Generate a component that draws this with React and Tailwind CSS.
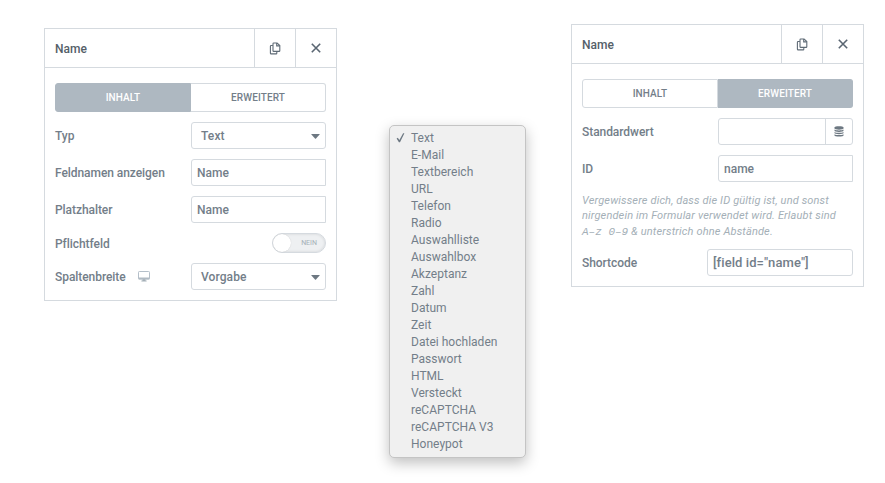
import React from "react";

const fieldTypes = [
  "Text",
  "E-Mail",
  "Textbereich",
  "URL",
  "Telefon",
  "Radio",
  "Auswahlliste",
  "Auswahlbox",
  "Akzeptanz",
  "Zahl",
  "Datum",
  "Zeit",
  "Datei hochladen",
  "Passwort",
  "HTML",
  "Versteckt",
  "reCAPTCHA",
  "reCAPTCHA V3",
  "Honeypot",
];

function CopyIcon() {
  return (
    <svg width="12" height="13" viewBox="0 0 12 13" fill="none" stroke="#5f6b76" strokeWidth="1.1">
      <path d="M4.700 1h3.400l2.700 2.500v5.200a.7.7 0 0 1-.7.700H4.700a.7.7 0 0 1-.7-.7V1.700a.7.7 0 0 1 .7-.7z" />
      <path d="M7.700 1v2.900h3" />
      <path d="M3.900 3.500H2.100a.7.7 0 0 0-.7.700v7a.7.7 0 0 0 .7.700h5a.7.7 0 0 0 .7-.7V9.600" />
    </svg>
  );
}

function CloseIcon() {
  return (
    <svg width="10" height="10" viewBox="0 0 10 10" stroke="#5a6672" strokeWidth="1.600">
      <path d="M.8.8l8.400 8.400M9.200.8L.8 9.200" />
    </svg>
  );
}

function MonitorIcon() {
  return (
    <svg width="12" height="11" viewBox="0 0 12 11">
      <rect x=".5" y=".5" width="11" height="7.500" rx=".8" fill="none" stroke="#b4bfc9" />
      <path d="M.5 6.500h11v1.900H.5z" fill="#b0bac3" />
      <path d="M4.700 8.200h2.600l.3 1.300h1v.9H3.400v-.9h1z" fill="#a4afb7" />
    </svg>
  );
}

function DatabaseIcon() {
  return (
    <svg width="10" height="11" viewBox="0 0 10 11" fill="#6d7882">
      <path d="M.5 1.600C.5.8 2.500.3 5 .3s4.500.5 4.500 1.300v.9C9.500 3.200 7.500 3.700 5 3.700S.5 3.200.5 2.500z" />
      <path d="M.5 3.500C1.500 4.200 3.200 4.400 5 4.400s3.500-.2 4.500-.9v1.300c0 .7-2 1.200-4.500 1.200S.5 5.500.5 4.800z" />
      <path d="M.5 5.900C1.500 6.600 3.200 6.800 5 6.800s3.500-.2 4.500-.9v1.200c0 .7-2 1.200-4.500 1.200S.5 7.800.5 7.100z" />
      <path d="M.5 8.200C1.500 8.900 3.200 9.100 5 9.100s3.500-.2 4.500-.9v1.200c0 .7-2 1.200-4.500 1.200S.5 10.100.5 9.400z" />
    </svg>
  );
}

function Panel({ children }) {
  return (
    <div className="w-[293px] border border-[#d5dadf] bg-white">
      <div className="flex h-[39px] border-b border-[#d5dadf]">
        <div className="flex flex-1 items-center pt-0.5 pl-2.5 font-medium text-[#556068]">Name</div>
        <button className="flex w-[41px] items-center justify-center border-l border-[#d5dadf]">
          <CopyIcon />
        </button>
        <button className="flex w-[41px] items-center justify-center border-l border-[#d5dadf]">
          <CloseIcon />
        </button>
      </div>
      <div className="flex flex-col gap-2.5 px-2.5 pt-[15px] pb-2.5">{children}</div>
    </div>
  );
}

function Tabs({ active }) {
  const on = "bg-[#aeb8c1] border-[#aeb8c1] text-white";
  const off = "bg-white border-[#d5dadf] text-[#737e89]";
  return (
    <div className="flex h-[29px] text-[10px] font-medium tracking-[0.1px]">
      <button className={"w-[136px] rounded-l-[3px] border " + (active === 0 ? on : off)}>INHALT</button>
      <button className={"w-[135px] rounded-r-[3px] border border-l-0 " + (active === 1 ? on : off)}>
        ERWEITERT
      </button>
    </div>
  );
}

function Row({ label, icon, children }) {
  return (
    <div className="flex items-center justify-between">
      <div className="flex items-center gap-3">
        <span className="pt-0.5 tracking-[-0.06px]">{label}</span>
        {icon}
      </div>
      {children}
    </div>
  );
}

function Select({ value }) {
  return (
    <div className="flex h-[27px] w-[135px] items-center justify-between rounded-[3px] border border-[#d5dadf] pt-0.5 pr-[5px] pl-[9px]">
      <span className="tracking-[0.1px]">{value}</span>
      <svg width="9" height="5" viewBox="0 0 9 5" fill="#6d7882">
        <path d="M.6 0h7.800q.6 0 .2.500L5 4.600q-.5.500-1 0L.4.500Q0 0 .6 0z" />
      </svg>
    </div>
  );
}

function Input({ value }) {
  return (
    <div className="flex h-[27px] w-[135px] items-center rounded-l-[3px] border border-[#d5dadf] pt-0.5 pl-[5px]">
      {value}
    </div>
  );
}

function Switch() {
  return (
    <div className="flex h-5 w-[54px] items-center justify-between rounded-full border border-[#d5dadf] bg-[#eef0f2] pr-2 shadow-[inset_0_0_3px_rgba(0,0,0,0.12)]">
      <div className="size-[18px] rounded-full bg-white shadow-[0_0_1px_rgba(0,0,0,0.2)]" />
      <span className="pt-px text-[7px] font-normal text-[#a4afb7]">NEIN</span>
    </div>
  );
}

function TypeMenu() {
  return (
    <ul className="mt-[125px] h-[333px] w-[137px] rounded-[5px] border border-[#c4c4c4] bg-[#f0f0f0] py-1 font-normal tracking-[0.02px] shadow-[0_5px_14px_rgba(0,0,0,0.25)]">
      {fieldTypes.map((type, i) => (
        <li key={type} className="flex h-[17px] items-center">
          <span className="flex w-[21px] justify-center pb-0.5">
            {i === 0 && (
              <svg width="9" height="10" viewBox="0 0 9 10" fill="#6d7882">
                <path d="M.6 5.400L1.800 4.700L3.400 7.100L7.100.3L8.400.3L4 9.300L2.900 9.300z" />
              </svg>
            )}
          </span>
          {type}
        </li>
      ))}
    </ul>
  );
}

function App() {
  return (
    <div className="flex h-[483px] w-[885px] items-start bg-white font-['Roboto',sans-serif] text-[12px] leading-[15px] font-medium text-[#737e89] antialiased">
      <div className="mt-7 ml-11">
        <Panel>
          <Tabs active={0} />
          <Row label="Typ">
            <Select value="Text" />
          </Row>
          <Row label="Feldnamen anzeigen">
            <Input value="Name" />
          </Row>
          <Row label="Platzhalter">
            <Input value="Name" />
          </Row>
          <Row label="Pflichtfeld">
            <Switch />
          </Row>
          <Row label="Spaltenbreite" icon={<MonitorIcon />}>
            <Select value="Vorgabe" />
          </Row>
        </Panel>
      </div>

      <div className="ml-[52px]">
        <TypeMenu />
      </div>

      <div className="mt-6 ml-[45px]">
        <Panel>
          <Tabs active={1} />
          <Row label="Standardwert">
            <div className="flex h-[27px] w-[135px] justify-end rounded-[3px] border border-[#d5dadf]">
              <div className="flex w-[27px] items-center justify-center border-l border-[#d5dadf]">
                <DatabaseIcon />
              </div>
            </div>
          </Row>
          <Row label="ID">
            <Input value="name" />
          </Row>
          <p className="h-[47px] pt-px text-[11px] leading-[15px] font-normal tracking-[0.15px] whitespace-nowrap text-[#a4afb7] italic">
            Vergewissere dich, dass die ID gültig ist, und sonst
            <br />
            nirgendein im Formular verwendet wird. Erlaubt sind
            <br />
            <span className="inline-block pt-px">
              <code className="font-['Liberation_Mono',monospace] text-[11px] tracking-normal">A–z 0–9</code> &amp;
              unterstrich ohne Abstände.
            </span>
          </p>
          <Row label="Shortcode">
            <div className="flex h-[27px] w-[146px] items-center rounded-[3px] border border-[#d5dadf] pb-px pl-[5px] text-[13px] tracking-[0.08px]">
              [field id="name"]
            </div>
          </Row>
        </Panel>
      </div>
    </div>
  );
}

export default App;
